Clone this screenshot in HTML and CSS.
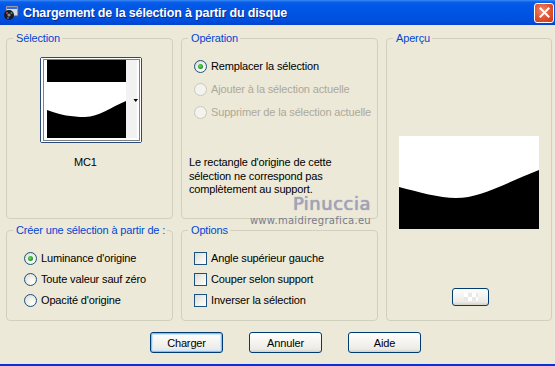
FILE: index.html
```html
<!DOCTYPE html>
<html lang="fr">
<head>
<meta charset="utf-8">
<title>Chargement de la sélection à partir du disque</title>
<link rel="stylesheet" href="styles.css">
</head>
<body>
<div class="window">
  <div class="titlebar">
    <svg class="app-icon" width="16" height="16" viewBox="0 0 16 16">
      <rect x="3" y="1" width="12" height="10" fill="#d8dce8" stroke="#4a5a78"/>
      <rect x="4" y="2" width="10" height="2" fill="#3a6ad8"/>
      <circle cx="6" cy="10" r="5" fill="#1a1a22"/>
      <circle cx="6" cy="10" r="1.6" fill="#8a8a9a"/>
      <circle cx="4" cy="8" r="1" fill="#e04040"/>
      <circle cx="8.5" cy="8" r="1" fill="#30b040"/>
      <circle cx="5" cy="13" r="1" fill="#3070e0"/>
    </svg>
    <span class="title">Chargement de la sélection à partir du disque</span>
    <span class="close" aria-label="Fermer">
      <svg width="11" height="11" viewBox="0 0 11 11"><path d="M1.5 1.5 L9.5 9.5 M9.5 1.5 L1.5 9.5" stroke="#fff" stroke-width="2" stroke-linecap="square"/></svg>
    </span>
  </div>

  <div class="content">
    <div class="groups">
      <fieldset class="group g-selection">
        <legend>Sélection</legend>
        <div class="thumb">
          <svg width="100" height="84" viewBox="0 0 100 84">
            <rect x="0" y="0" width="100" height="84" fill="#fff"/>
            <rect x="85" y="2" width="11" height="78" fill="#f2f2f2"/>
            <rect x="6" y="2" width="79" height="22" fill="#000"/>
            <path d="M6 52 C20 57 30 59 44 59 C58 59 70 49 85 43 L85 80 L6 80 Z" fill="#000"/>
            <path d="M92.5 41 L97 41 L94.75 44 Z" fill="#000"/>
            <rect x="2.5" y="1.5" width="96" height="81" fill="none" stroke="#000" stroke-dasharray="1 1"/>
          </svg>
        </div>
        <div class="thumb-name">MC1</div>
      </fieldset>

      <fieldset class="group g-operation">
        <legend>Opération</legend>
        <div class="options">
          <label class="opt"><span class="radio checked"></span>Remplacer la sélection</label>
          <label class="opt disabled"><span class="radio"></span>Ajouter à la sélection actuelle</label>
          <label class="opt disabled"><span class="radio"></span>Supprimer de la sélection actuelle</label>
        </div>
        <p class="note">Le rectangle d'origine de cette sélection ne correspond pas complètement au support.</p>
      </fieldset>

      <fieldset class="group g-preview">
        <legend>Aperçu</legend>
        <svg class="preview" width="140" height="93" viewBox="0 0 140 93">
          <rect width="140" height="93" fill="#fff"/>
          <path d="M0 51 C20 56 40 62 57 62 C80 62 100 50 140 34 L140 93 L0 93 Z" fill="#000"/>
        </svg>
        <span class="mini-btn"><span class="checker"></span></span>
      </fieldset>

      <fieldset class="group g-create">
        <legend>Créer une sélection à partir de :</legend>
        <div class="options tight">
          <label class="opt"><span class="radio checked"></span>Luminance d'origine</label>
          <label class="opt"><span class="radio"></span>Toute valeur sauf zéro</label>
          <label class="opt"><span class="radio"></span>Opacité d'origine</label>
        </div>
      </fieldset>

      <fieldset class="group g-opts">
        <legend>Options</legend>
        <div class="options tight">
          <label class="opt"><span class="check"></span>Angle supérieur gauche</label>
          <label class="opt"><span class="check"></span>Couper selon support</label>
          <label class="opt"><span class="check"></span>Inverser la sélection</label>
        </div>
      </fieldset>
    </div>

    <div class="buttons">
      <span class="btn default">Charger</span>
      <span class="btn">Annuler</span>
      <span class="btn">Aide</span>
    </div>

    <div class="watermark">
      <span class="wm-name">Pinuccia</span>
      <span class="wm-url">www.maidiregrafica.eu</span>
    </div>
  </div>
  <div class="bottom-edge"></div>
</div>
</body>
</html>
```

FILE: styles.css
```css
* { box-sizing: border-box; }
html, body { margin: 0; padding: 0; }
body {
  width: 555px;
  height: 366px;
  overflow: hidden;
  background: #ece9d8;
  font-family: "Liberation Sans", Arial, sans-serif;
  font-size: 11px;
  letter-spacing: -0.15px;
  color: #000;
}
.window {
  width: 555px;
  height: 366px;
  display: flex;
  flex-direction: column;
  background: #ece9d8;
}
.titlebar {
  height: 25px;
  flex: none;
  display: flex;
  align-items: center;
  padding-left: 3px;
  background: linear-gradient(to bottom, #3d8cf7 0, #0b5fe8 2px, #0058e6 6px, #0054e3 14px, #004fde 20px, #0044d0 25px);
  color: #fff;
}
.app-icon { flex: none; margin-right: 4px; }
.title {
  font-family: "Liberation Sans", Arial, sans-serif;
  font-weight: bold;
  font-size: 12.5px;
  letter-spacing: -0.15px;
  text-shadow: 1px 1px 0 #0a2a8a;
  flex: 1;
}
.close {
  flex: none;
  width: 20px;
  height: 20px;
  margin-right: 1px;
  border: 1px solid #fff;
  border-radius: 3px;
  background: radial-gradient(circle at 40% 35%, #f0866a 0, #e0502e 55%, #c83a1a 100%);
  display: flex;
  align-items: center;
  justify-content: center;
}
.content {
  flex: 1;
  position: relative;
  padding: 6px 0 0 6px;
}
.groups {
  display: grid;
  grid-template-columns: 167px 197px 166px;
  grid-template-rows: 188px 98px;
  column-gap: 8px;
  row-gap: 4px;
}
.group {
  margin: 0;
  padding: 0;
  border: 1px solid #d0d0bf;
  border-radius: 4px;
  min-width: 0;
  position: relative;
}
.group legend {
  margin-left: 6px;
  padding: 0 2px 0 3px;
  line-height: 14px;
  color: #0046d5;
  white-space: nowrap;
}
.g-selection { grid-column: 1; grid-row: 1; display: flex; flex-direction: column; align-items: flex-start; }
.g-operation { grid-column: 2; grid-row: 1; }
.g-preview { grid-column: 3; grid-row: 1 / span 2; }
.g-create { grid-column: 1; grid-row: 2; }
.g-opts { grid-column: 2; grid-row: 2; }

.thumb {
  margin: 12px 0 0 33px;
  width: 102px;
  height: 86px;
  border: 1px solid #2a4a7a;
  border-radius: 2px;
  background: #fff;
}
.thumb svg { display: block; }
.thumb-name {
  margin: 13px 0 0 67px;
  line-height: 13px;
}

.options {
  display: flex;
  flex-direction: column;
  gap: 10px;
  padding: 15px 0 0 12px;
}
.options.tight { gap: 8px; padding: 15px 0 0 17px; }
.g-opts .options.tight { padding-left: 12px; }
.opt {
  display: flex;
  align-items: center;
  line-height: 13px;
  white-space: nowrap;
}
.opt.disabled { color: #aca899; }
.radio {
  flex: none;
  width: 13px;
  height: 13px;
  border-radius: 50%;
  border: 1px solid #1c5180;
  background: radial-gradient(circle at 65% 70%, #fff 0, #f2f1ea 40%, #d8d7cf 100%);
  margin-right: 4px;
  position: relative;
}
.radio.checked::after {
  content: "";
  position: absolute;
  left: 3px;
  top: 3px;
  width: 5px;
  height: 5px;
  border-radius: 50%;
  background: radial-gradient(circle at 40% 40%, #6fd86f 0, #21a121 60%, #1a8a1a 100%);
}
.opt.disabled .radio {
  border-color: #cac8bb;
  background: #f4f3ee;
}
.check {
  flex: none;
  width: 13px;
  height: 13px;
  border: 1px solid #1c5180;
  background: linear-gradient(135deg, #dcdbd5 0, #f2f1ea 55%, #fff 100%);
  margin-right: 4px;
}
.note {
  margin: 37px 0 0 7px;
  line-height: 13.5px;
  width: 170px;
}

.g-preview { display: flex; flex-direction: column; align-items: flex-start; }
.preview { display: block; margin: 91px 0 0 12px; }
.mini-btn {
  margin: 59px 0 0 65px;
  width: 37px;
  height: 18px;
  border: 1px solid #003c74;
  border-radius: 3px;
  background: linear-gradient(#fdfdfc, #ecebe6 80%, #d6d0c5);
  display: flex;
  align-items: center;
  justify-content: center;
}
.checker {
  width: 14px;
  height: 8px;
  background: conic-gradient(#e8e8e8 25%, #fff 0 50%, #e8e8e8 0 75%, #fff 0) 0 0 / 8px 8px;
}

.buttons {
  display: flex;
  gap: 26px;
  padding: 11px 0 0 144px;
}
.btn {
  width: 73px;
  height: 21px;
  border: 1px solid #003c74;
  border-radius: 3px;
  background: linear-gradient(#ffffff, #f4f3ee 50%, #ecebe6 85%, #d6d0c5);
  display: flex;
  align-items: center;
  justify-content: center;
}
.btn.default {
  box-shadow: inset 0 0 0 1px #98b8ea, inset 0 0 0 2px #cee7ff;
}

.watermark {
  position: absolute;
  left: 259px;
  top: 169px;
  display: flex;
  flex-direction: column;
  align-items: flex-end;
  width: 112px;
  pointer-events: none;
}
.wm-name {
  font-family: "DejaVu Sans", sans-serif;
  font-size: 18px;
  line-height: 20px;
  letter-spacing: 0.5px;
  color: #a3a3bd;
  text-shadow: 0 0 1px #7c7c96;
}
.wm-url {
  font-family: "DejaVu Sans", sans-serif;
  font-size: 10px;
  line-height: 11px;
  margin-top: 1px;
  letter-spacing: 0.3px;
  color: #7a7a8c;
}
.bottom-edge {
  height: 2px;
  flex: none;
  background: #0831d9;
}
```
